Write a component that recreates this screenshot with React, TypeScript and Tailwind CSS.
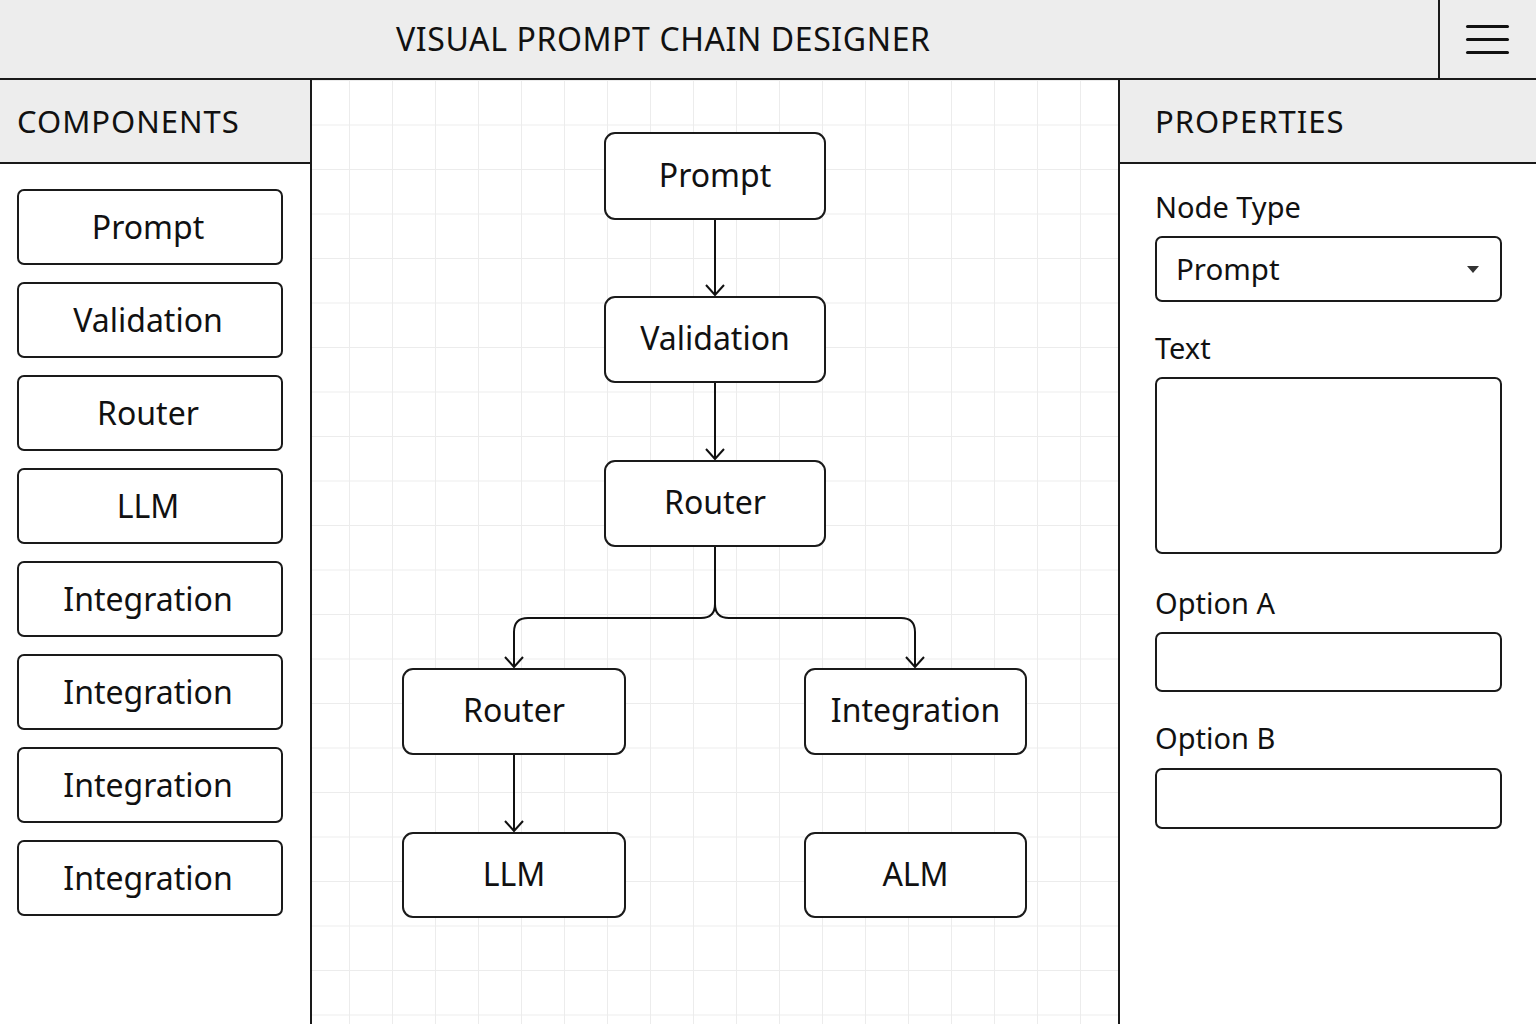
import React from 'react';

const font = { fontFamily: '"Noto Sans", "Open Sans", sans-serif' };

const components = ['Prompt', 'Validation', 'Router', 'LLM', 'Integration', 'Integration', 'Integration', 'Integration'];

const nodes = [
  { label: 'Prompt', left: 292, top: 52, w: 222, h: 88 },
  { label: 'Validation', left: 292, top: 216, w: 222, h: 87 },
  { label: 'Router', left: 292, top: 380, w: 222, h: 87 },
  { label: 'Router', left: 90, top: 588, w: 224, h: 87 },
  { label: 'Integration', left: 492, top: 588, w: 223, h: 87 },
  { label: 'LLM', left: 90, top: 752, w: 224, h: 86 },
  { label: 'ALM', left: 492, top: 752, w: 223, h: 86 },
];

const Arrowhead = ({ x, y }: { x: number; y: number }) => (
  <path d={`M${x - 9} ${y - 10} L${x} ${y} L${x + 9} ${y - 10}`} fill="none" stroke="#111" strokeWidth={2} />
);

const App: React.FC = () => {
  return (
    <div className="h-screen w-full flex flex-col bg-white text-[#111] overflow-hidden" style={font}>
      {/* Top bar */}
      <header className="h-[80px] shrink-0 flex bg-[#ededed] border-b-2 border-[#1a1a1a]">
        <div className="flex-1 flex items-center pl-[396px]">
          <h1 className="text-[32px] tracking-[0.6px] leading-none">VISUAL PROMPT CHAIN DESIGNER</h1>
        </div>
        <button className="w-[98px] border-l-2 border-[#1a1a1a] flex flex-col items-center justify-center gap-[10px] pr-[2px]">
          <span className="block w-[43px] h-[3px] bg-[#111] rounded-full" />
          <span className="block w-[43px] h-[3px] bg-[#111] rounded-full" />
          <span className="block w-[43px] h-[3px] bg-[#111] rounded-full" />
        </button>
      </header>

      <div className="flex-1 flex min-h-0">
        {/* Components sidebar */}
        <aside className="w-[312px] shrink-0 border-r-2 border-[#1a1a1a] flex flex-col">
          <div className="h-[84px] bg-[#ededed] border-b-2 border-[#1a1a1a] flex items-center pl-[17px]">
            <h2 className="text-[31px] tracking-[1px] leading-none">COMPONENTS</h2>
          </div>
          <div className="flex flex-col gap-[17px] pt-[25px] pl-[17px] pr-[27px]">
            {components.map((c, i) => (
              <button
                key={i}
                className="h-[76px] w-[266px] border-2 border-[#1a1a1a] rounded-[7px] bg-white flex items-center justify-center text-[32px] pr-[4px]"
              >
                {c}
              </button>
            ))}
          </div>
        </aside>

        {/* Canvas */}
        <main className="flex-1 relative bg-white bg-[linear-gradient(to_right,#ececec_1px,transparent_1px),linear-gradient(to_bottom,#ececec_1px,transparent_1px)] bg-[size:43px_44.5px] bg-[position:37px_0px]">
          <svg className="absolute inset-0 w-full h-full" fill="none">
            <path d="M403 140 V214" stroke="#111" strokeWidth={2} />
            <Arrowhead x={403} y={215} />
            <path d="M403 303 V378" stroke="#111" strokeWidth={2} />
            <Arrowhead x={403} y={379} />
            <path d="M403 467 V524 Q403 538 389 538 H216 Q202 538 202 552 V586" stroke="#111" strokeWidth={2} />
            <Arrowhead x={202} y={587} />
            <path d="M403 467 V524 Q403 538 417 538 H589 Q603 538 603 552 V586" stroke="#111" strokeWidth={2} />
            <Arrowhead x={603} y={587} />
            <path d="M202 675 V750" stroke="#111" strokeWidth={2} />
            <Arrowhead x={202} y={751} />
          </svg>
          {nodes.map((n, i) => (
            <div
              key={i}
              className="absolute border-2 border-[#1a1a1a] rounded-[11px] bg-white flex items-center justify-center text-[32px] pb-[3px]"
              style={{ left: n.left, top: n.top, width: n.w, height: n.h }}
            >
              {n.label}
            </div>
          ))}
        </main>

        {/* Properties panel */}
        <aside className="w-[418px] shrink-0 border-l-2 border-[#1a1a1a] flex flex-col">
          <div className="h-[84px] bg-[#ededed] border-b-2 border-[#1a1a1a] flex items-center pl-[35px]">
            <h2 className="text-[31px] tracking-[1px] leading-none">PROPERTIES</h2>
          </div>
          <div className="flex flex-col pl-[35px] pr-[34px] pt-[26px] text-[29px]">
            <label className="leading-[34px]">Node Type</label>
            <div className="mt-[12px] h-[66px] border-2 border-[#1a1a1a] rounded-[7px] flex items-center justify-between pl-[19px] pr-[20px]">
              <span className="text-[29.5px]">Prompt</span>
              <svg width="14" height="9" viewBox="0 0 14 9">
                <path d="M1 1 L13 1 L7 8 Z" fill="#333" />
              </svg>
            </div>
            <label className="leading-[34px] mt-[29px]">Text</label>
            <div className="mt-[12px] h-[177px] border-2 border-[#1a1a1a] rounded-[7px]" />
            <label className="leading-[34px] mt-[32px]">Option A</label>
            <div className="mt-[12px] h-[60px] border-2 border-[#1a1a1a] rounded-[7px]" />
            <label className="leading-[34px] mt-[29px]">Option B</label>
            <div className="mt-[13px] h-[61px] border-2 border-[#1a1a1a] rounded-[7px]" />
          </div>
        </aside>
      </div>
    </div>
  );
};

export default App;
